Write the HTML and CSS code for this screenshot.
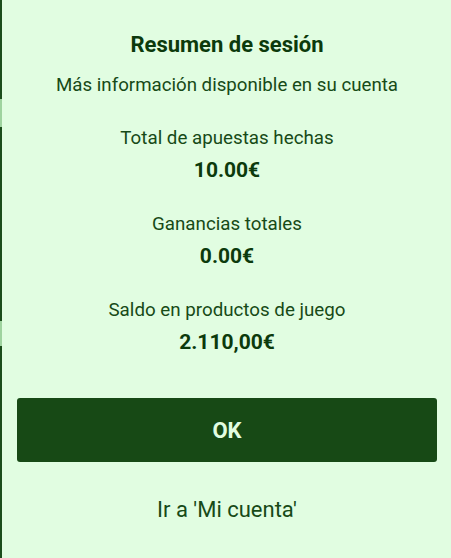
FILE: index.html
```html
<!DOCTYPE html>
<html lang="es">
<head>
<meta charset="UTF-8" />
<title>Resumen de sesión</title>
<link rel="stylesheet" href="styles.css">
</head>
<body>

<div class="dialog">
  <h2 class="title">Resumen de sesión</h2>
  <p class="subtitle">Más información disponible en su cuenta</p>

  <div class="stats">
    <div class="stat">
      <div class="label">Total de apuestas hechas</div>
      <div class="value">10.00€</div>
    </div>
    <div class="stat">
      <div class="label">Ganancias totales</div>
      <div class="value">0.00€</div>
    </div>
    <div class="stat">
      <div class="label">Saldo en productos de juego</div>
      <div class="value">2.110,00€</div>
    </div>
  </div>

  <button class="ok-btn">OK</button>
  <a class="account-link" href="#">Ir a 'Mi cuenta'</a>
</div>

</body>
</html>
```

FILE: styles.css
```css
html, body {
  margin: 0;
  height: 100%;
}
body {
  background: #e1fde1;
  color: #174a17;
  font-family: Roboto, "Liberation Sans", sans-serif;
}
.dialog {
  box-sizing: border-box;
  height: 100%;
  border-left: 2px solid #1b4d1b;
  border-image: linear-gradient(#1b4d1b 100px, #9fd39f 100px, #9fd39f 128px, #1b4d1b 128px, #1b4d1b 321px, #9fd39f 321px, #9fd39f 346px, #1b4d1b 346px) 1;
  padding: 31px 14px 0 15px;
  display: flex;
  flex-direction: column;
  align-items: stretch;
  text-align: center;
}
.title {
  margin: 0;
  font-size: 22px;
  line-height: 28px;
  font-weight: bold;
  color: #0c3a0c;
}
.subtitle {
  margin: 13px 0 0;
  font-size: 18.7px;
  line-height: 26px;
}
.stats {
  display: flex;
  flex-direction: column;
  gap: 27px;
  margin-top: 27px;
}
.label {
  font-size: 18.75px;
  line-height: 26px;
}
.value {
  margin-top: 5px;
  font-size: 21px;
  line-height: 28px;
  font-weight: bold;
  color: #0c3a0c;
}
.ok-btn {
  margin-top: 42px;
  height: 64px;
  border: none;
  border-radius: 3px;
  background: #174915;
  color: #e1fde1;
  font-family: inherit;
  font-size: 22px;
  font-weight: bold;
  cursor: pointer;
}
.account-link {
  margin-top: 35px;
  font-size: 22px;
  line-height: 26px;
  color: #174a17;
  text-decoration: none;
}
```
